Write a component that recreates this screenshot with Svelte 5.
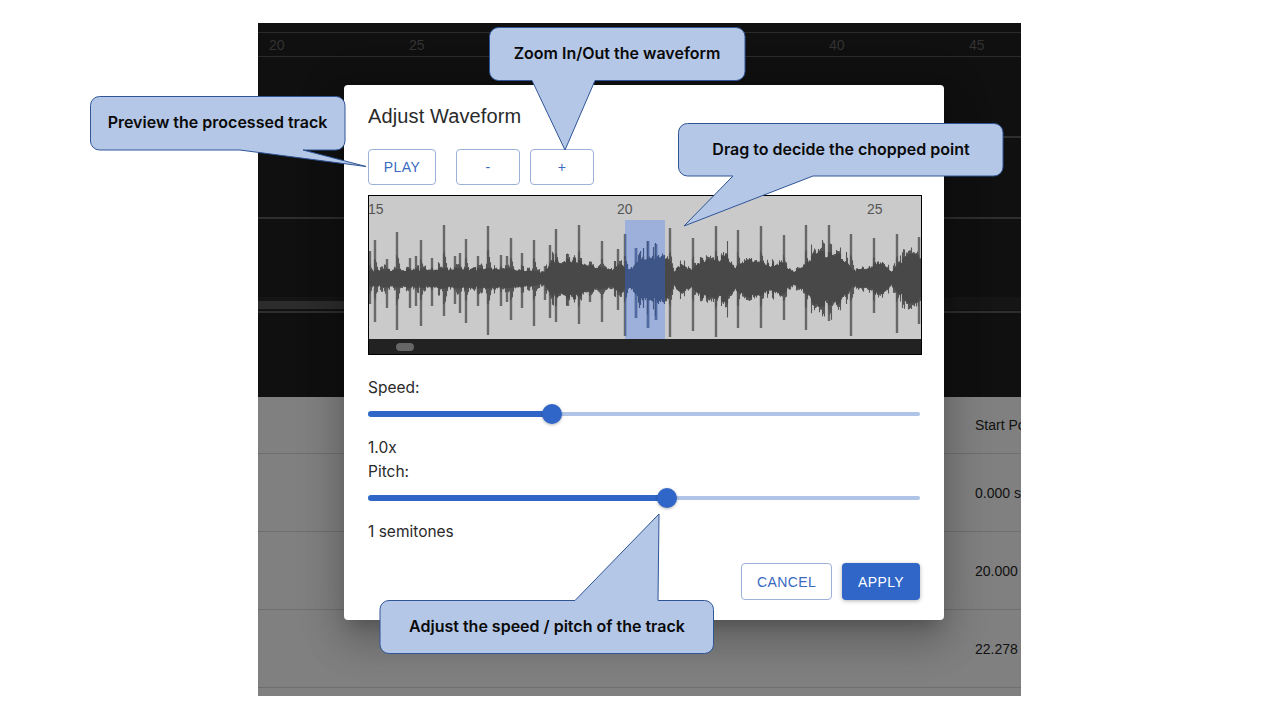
<script lang="ts">
    // spikes: [x, up, down] relative to the waveform box
    const spikes = [
        [1, 27, 26], [6, 38, 44], [18, 19, 30], [28, 46, 52], [41, 20, 30], [47, 22, 28], [52, 38, 48],
        [63, 20, 28], [75, 53, 38], [86, 22, 26], [91, 25, 35], [97, 39, 45], [109, 22, 28], [119, 52, 57],
        [132, 23, 28], [138, 22, 24], [142, 40, 42], [153, 25, 30], [165, 38, 48], [176, 12, 22], [181, 33, 40],
        [187, 49, 44], [199, 24, 28], [210, 53, 46], [221, 14, 24], [233, 37, 44], [249, 29, 32], [256, 44, 58],
        [267, 30, 40], [279, 37, 50], [287, 34, 42], [301, 50, 59], [324, 40, 53], [347, 52, 59], [369, 48, 50],
        [392, 52, 50], [415, 43, 42], [437, 53, 52], [460, 53, 43], [482, 44, 58], [505, 40, 35], [528, 44, 55],
        [550, 41, 46]
    ];

    // body envelope: [x, amplitude]
    const envelope = [
        [0, 8], [30, 9], [80, 10], [130, 10], [150, 9], [175, 6], [183, 18], [205, 20], [222, 13], [240, 9],
        [252, 14], [258, 6], [272, 22], [290, 24], [298, 25], [304, 7], [312, 15], [322, 8], [332, 20], [342, 18],
        [358, 24], [366, 12], [378, 21], [402, 14], [412, 18], [422, 7], [432, 10], [447, 28], [472, 24], [483, 8],
        [497, 10], [512, 19], [522, 7], [537, 24], [552, 24]
    ];

    function amp(x: number) {
        for (let i = 1; i < envelope.length; i++) {
            if (x <= envelope[i][0]) {
                const [x0, a0] = envelope[i - 1];
                const [x1, a1] = envelope[i];
                return a0 + ((a1 - a0) * (x - x0)) / (x1 - x0);
            }
        }
        return 20;
    }

    // each transient leaves a short decaying shoulder behind it
    function shoulder(x: number) {
        let s = 0;
        for (const [sx, up] of spikes) {
            const d = x - sx;
            if (d >= -1 && d < 5) s = Math.max(s, up * 0.5 * (1 - Math.max(d, 0) / 5));
        }
        return s;
    }

    const midY = 82;
    let seed = 11;
    function rnd() {
        seed = (seed * 16807) % 2147483647;
        return seed / 2147483647;
    }

    let body = '';
    let halo = '';
    let bump = 1;
    let bumpLeft = 0;
    for (let x = 0; x < 552; x++) {
        if (bumpLeft === 0) {
            bump = 0.8 + rnd() * rnd() * 0.9;
            bumpLeft = 1 + Math.floor(rnd() * 3);
        }
        bumpLeft--;
        const a = Math.max(amp(x) * bump, shoulder(x));
        const up = a * (0.92 + rnd() * 0.16);
        const down = a * (0.95 + rnd() * 0.2) + 1;
        const inner = Math.min(a, amp(x) * 1.05);
        body += `M${x + 0.5} ${(midY - inner * 0.95).toFixed(1)}V${(midY + inner).toFixed(1)}`;
        halo += `M${x + 0.5} ${(midY - up).toFixed(1)}V${(midY + down).toFixed(1)}`;
    }
    const spikePath = spikes.map(([x, up, down]) => `M${x} ${midY - up}V${midY + down}`).join('');

    const ticks = [
        { label: '15', x: -1 },
        { label: '20', x: 248 },
        { label: '25', x: 498 }
    ];

    const rows = [
        { label: 'Start Po', h: 57 },
        { label: '0.000 s', h: 78 },
        { label: '20.000', h: 78 },
        { label: '22.278', h: 78 }
    ];

    const callouts = [
        {
            d: 'M99.5 96.5H336a9 9 0 0 1 9 9V141a9 9 0 0 1-9 9H303L366 166.5L240 150H99.5a9 9 0 0 1-9-9V105.5a9 9 0 0 1 9-9Z',
            text: 'Preview the processed track', x: 217.5, y: 128
        },
        {
            d: 'M498.5 27.5H736a9 9 0 0 1 9 9V71.5a9 9 0 0 1-9 9H595L565 150L532 80.5H498.5a9 9 0 0 1-9-9V36.5a9 9 0 0 1 9-9Z',
            text: 'Zoom In/Out the waveform', x: 617, y: 59
        },
        {
            d: 'M687.5 123.5H994a9 9 0 0 1 9 9V167a9 9 0 0 1-9 9H813L684 226L733 176H687.5a9 9 0 0 1-9-9V132.5a9 9 0 0 1 9-9Z',
            text: 'Drag to decide the chopped point', x: 841, y: 155
        },
        {
            d: 'M389 600.5H575L659 514L658 600.5H704.5a9 9 0 0 1 9 9V644.500a9 9 0 0 1-9 9H389a9 9 0 0 1-9-9V609.5a9 9 0 0 1 9-9Z',
            text: 'Adjust the speed / pitch of the track', x: 547, y: 632
        }
    ];
</script>

<div class="stage">
    <div class="timeline">
        <div class="ruler">
            <span>20</span><span>25</span><span class="far">40</span><span>45</span>
        </div>
        <div class="track-row"></div>
        <div class="track-row"></div>
        <div class="h-scroll"><div class="h-scroll-thumb"></div></div>
        <div class="track-end"></div>
    </div>
    <div class="table">
        {#each rows as row}
            <div class="table-row" style="height: {row.h}px">
                <span>{row.label}</span>
            </div>
        {/each}
    </div>

    <div class="dialog">
        <h2>Adjust Waveform</h2>
        <div class="toolbar">
            <button class="btn play">PLAY</button>
            <button class="btn zoom">-</button>
            <button class="btn zoom">+</button>
        </div>

        <div class="wave">
            <svg width="552" height="143" viewBox="0 0 552 143">
                <defs>
                    <clipPath id="sel"><rect x="256" y="24" width="40" height="119" /></clipPath>
                </defs>
                <rect class="selection" x="256" y="24" width="40" height="119" />
                <path d={spikePath} stroke="#686868" stroke-width="2.4" fill="none" />
                <path d={halo} stroke="#555" stroke-width="1.1" fill="none" />
                <path d={body} stroke="#484848" stroke-width="1.1" fill="none" />
                <g clip-path="url(#sel)">
                    <path d={spikePath} stroke="#4f6ba6" stroke-width="2.4" fill="none" />
                    <path d={halo} stroke="#3d5587" stroke-width="1.1" fill="none" />
                    <path d={body} stroke="#3d5587" stroke-width="1.1" fill="none" />
                </g>
            </svg>
            {#each ticks as tick}
                <span class="tick" style="left: {tick.x}px">{tick.label}</span>
            {/each}
            <div class="scroll"><div class="scroll-thumb"></div></div>
        </div>

        <div class="label speed">Speed:</div>
        <div class="slider">
            <div class="fill" style="width: 184px"></div>
            <div class="thumb" style="left: 184px"></div>
        </div>
        <div class="label value">1.0x</div>
        <div class="label">Pitch:</div>
        <div class="slider">
            <div class="fill" style="width: 299px"></div>
            <div class="thumb" style="left: 299px"></div>
        </div>
        <div class="label value">1 semitones</div>

        <div class="actions">
            <button class="btn cancel">CANCEL</button>
            <button class="btn apply">APPLY</button>
        </div>
    </div>
</div>

<svg class="callouts" width="1280" height="720" viewBox="0 0 1280 720">
    {#each callouts as c}
        <path d={c.d} fill="#b4c7e7" stroke="#2f5597" stroke-width="1" stroke-linejoin="round" />
        <text x={c.x} y={c.y} text-anchor="middle">{c.text}</text>
    {/each}
</svg>

<style>
    :global(body) {
        margin: 0;
        background: #fff;
    }

    .stage {
        position: relative;
        width: 763px;
        height: 673px;
        margin: 23px 0 0 258px;
        overflow: hidden;
        background: #808080;
        font-family: "Liberation Sans", Arial, sans-serif;
    }

    .timeline {
        height: 374px;
        background: #101010;
        padding-top: 9px;
        box-sizing: border-box;
    }

    .ruler {
        display: flex;
        box-sizing: border-box;
        height: 25px;
        border-top: 1px solid #2b2b2b;
        border-bottom: 1px solid #2b2b2b;
        padding-left: 11px;
        font-size: 14px;
        line-height: 24px;
        color: #333;
    }

    .ruler span {
        flex: none;
        width: 140px;
    }

    .ruler .far {
        margin-left: 280px;
    }

    .track-row {
        box-sizing: border-box;
        height: 81px;
        border-bottom: 2px solid #2e2e2e;
    }

    .h-scroll {
        margin-top: 78px;
        height: 13px;
        padding-top: 4px;
        box-sizing: border-box;
        background: #151515;
    }

    .h-scroll-thumb {
        width: 300px;
        height: 8px;
        background: #2c2c2c;
    }

    .track-end {
        height: 2px;
        margin-top: 1px;
        background: #2e2e2e;
    }

    .table-row {
        display: flex;
        align-items: center;
        box-sizing: border-box;
        padding-left: 717px;
        border-bottom: 1px solid #6f6f6f;
        font-size: 14px;
        color: #111;
        white-space: nowrap;
    }

    .dialog {
        position: absolute;
        left: 86px;
        top: 62px;
        width: 600px;
        height: 535px;
        box-sizing: border-box;
        padding: 0 24px;
        background: #fff;
        border-radius: 4px;
        box-shadow: 0 11px 15px -7px rgba(0, 0, 0, 0.2), 0 24px 38px 3px rgba(0, 0, 0, 0.14), 0 9px 46px 8px rgba(0, 0, 0, 0.12);
    }

    h2 {
        margin: 0;
        padding-top: 18px;
        height: 46px;
        font-size: 20px;
        font-weight: 400;
        line-height: 26px;
        letter-spacing: 0.12px;
        color: #2a2a2a;
    }

    .toolbar {
        display: flex;
        height: 36px;
    }

    .btn {
        box-sizing: border-box;
        height: 36px;
        padding: 0;
        background: #fff;
        border: 1px solid #9db0d8;
        border-radius: 4px;
        font-family: "Liberation Sans", Arial, sans-serif;
        font-size: 14px;
        letter-spacing: 0.4px;
        color: #3a69bf;
    }

    .play {
        width: 68px;
        margin-right: 20px;
    }

    .zoom {
        width: 64px;
        margin-right: 10px;
    }

    .wave {
        position: relative;
        width: 554px;
        height: 160px;
        box-sizing: border-box;
        margin-top: 10px;
        background: #cacaca;
        border: 1px solid #000;
    }

    .wave svg {
        display: block;
    }

    .selection {
        fill: #9db0dc;
    }

    .tick {
        position: absolute;
        top: 5px;
        font-size: 14px;
        line-height: 16px;
        color: #555;
    }

    .scroll {
        height: 15px;
        background: #222;
        display: flex;
        align-items: center;
        padding-left: 27px;
    }

    .scroll-thumb {
        width: 18px;
        height: 8px;
        border-radius: 4px;
        background: #666;
    }

    .label {
        font-family: Inter, sans-serif;
        font-size: 15.5px;
        line-height: 24px;
        color: #2a2a2a;
    }

    .speed {
        margin-top: 21px;
    }

    .value {
        margin-top: 20px;
    }

    .slider {
        position: relative;
        width: 552px;
        height: 4px;
        margin-top: 12px;
        background: #b0c4e8;
        border-radius: 2px;
        margin-bottom: 11px;
    }

    .fill {
        position: absolute;
        top: -1px;
        left: 0;
        height: 6px;
        background: #2f66c8;
        border-radius: 3px;
    }

    .thumb {
        position: absolute;
        top: -8px;
        width: 20px;
        height: 20px;
        margin-left: -10px;
        border-radius: 50%;
        background: #2f66c8;
        box-shadow: 0 1px 3px rgba(0, 0, 0, 0.3);
    }

    .actions {
        display: flex;
        justify-content: flex-end;
        gap: 10px;
        margin-top: 19px;
    }

    .cancel {
        width: 91px;
        height: 37px;
    }

    .apply {
        width: 78px;
        height: 37px;
        border: none;
        background: #2f66c8;
        color: #fff;
        box-shadow: 0 1px 4px rgba(0, 0, 0, 0.3);
    }

    .callouts {
        position: absolute;
        left: 0;
        top: 0;
        pointer-events: none;
    }

    .callouts text {
        font-family: Inter, sans-serif;
        font-size: 16px;
        font-weight: 600;
        fill: #0a0a0a;
    }
</style>
